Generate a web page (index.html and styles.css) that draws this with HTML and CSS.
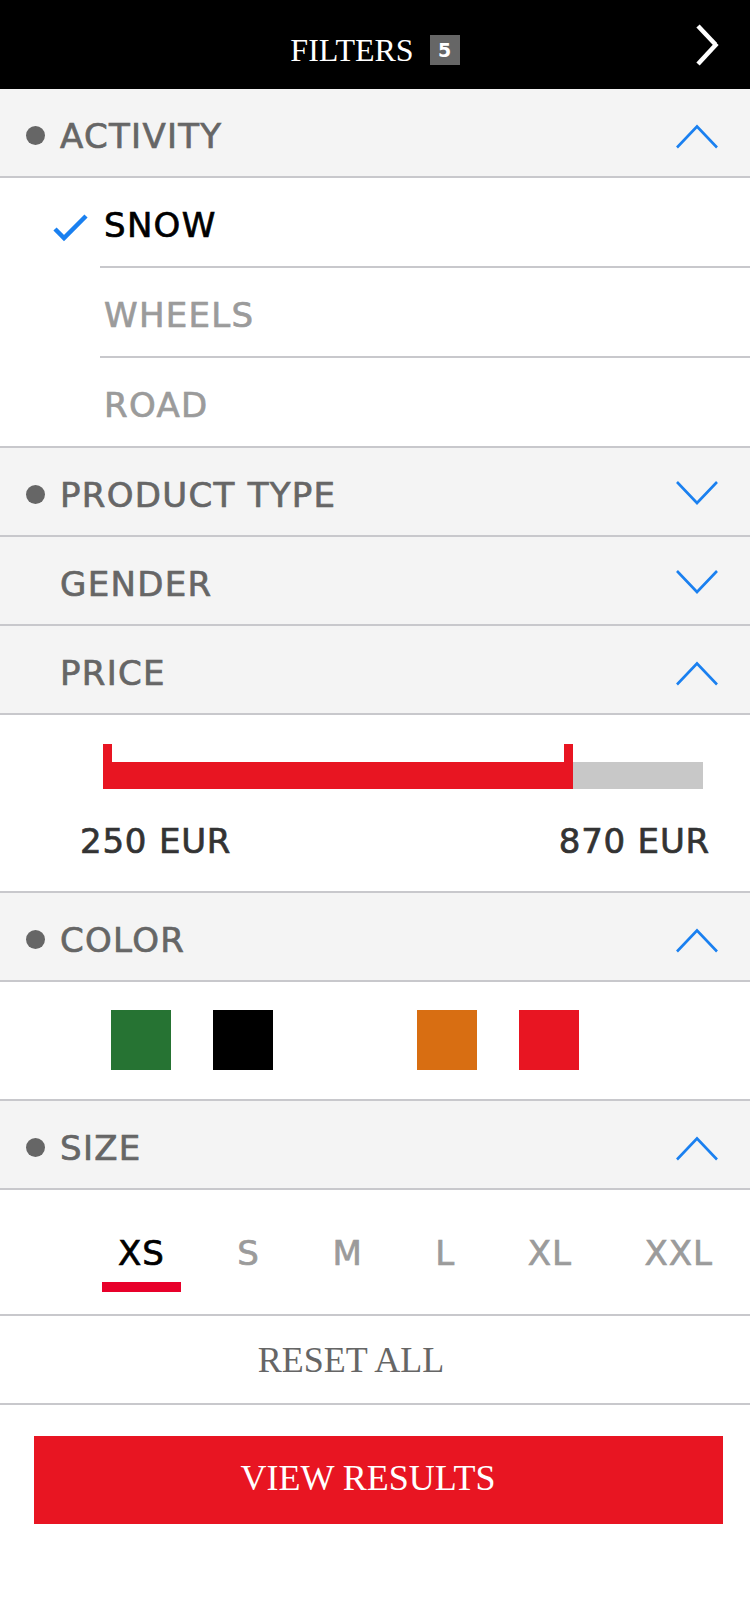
FILE: index.html
```html
<!DOCTYPE html>
<html>
<head>
<meta charset="utf-8">
<link rel="stylesheet" href="styles.css">
</head>
<body>
<div class="topbar">
  <div class="title-group">
    <span class="title">FILTERS</span>
    <span class="badge">5</span>
  </div>
  <svg class="close" width="30" height="46" viewBox="0 0 30 46">
    <line x1="6" y1="4" x2="23.5" y2="22.5" stroke="#fff" stroke-width="4.5"/>
    <line x1="25" y1="21.5" x2="6" y2="42" stroke="#fff" stroke-width="4.5"/>
  </svg>
</div>

<div class="acc-head">
  <span class="dot"></span>
  <span class="head-label">ACTIVITY</span>
  <svg class="chev" viewBox="0 0 42 30"><polyline points="1,26.5 21,5.5 41,26.5" fill="none" stroke="#1a80f0" stroke-width="2.6"/></svg>
</div>
<div class="opt-list">
  <div class="opt">
    <div class="check-col">
      <svg width="100" height="88" viewBox="0 0 100 88"><polyline points="55,51 64,60 86,38" fill="none" stroke="#1a80f0" stroke-width="4.5"/></svg>
    </div>
    <div class="opt-label on">SNOW</div>
  </div>
  <div class="opt">
    <div class="check-col"></div>
    <div class="opt-label">WHEELS</div>
  </div>
  <div class="opt">
    <div class="check-col"></div>
    <div class="opt-label">ROAD</div>
  </div>
</div>

<div class="acc-head">
  <span class="dot"></span>
  <span class="head-label">PRODUCT TYPE</span>
  <svg class="chev" viewBox="0 0 42 30"><polyline points="1,2 21,23 41,2" fill="none" stroke="#1a80f0" stroke-width="2.6"/></svg>
</div>
<div class="acc-head">
  <span class="dot none"></span>
  <span class="head-label">GENDER</span>
  <svg class="chev" viewBox="0 0 42 30"><polyline points="1,2 21,23 41,2" fill="none" stroke="#1a80f0" stroke-width="2.6"/></svg>
</div>
<div class="acc-head">
  <span class="dot none"></span>
  <span class="head-label">PRICE</span>
  <svg class="chev" viewBox="0 0 42 30"><polyline points="1,26.5 21,5.5 41,26.5" fill="none" stroke="#1a80f0" stroke-width="2.6"/></svg>
</div>
<div class="price-body">
  <div class="slider">
    <span class="handle"></span>
    <span class="fill" style="width:452px"></span>
    <span class="handle"></span>
    <span class="rest" style="width:130px"></span>
  </div>
  <div class="price-labels">
    <span>250 EUR</span>
    <span>870 EUR</span>
  </div>
</div>

<div class="acc-head">
  <span class="dot"></span>
  <span class="head-label">COLOR</span>
  <svg class="chev" viewBox="0 0 42 30"><polyline points="1,26.5 21,5.5 41,26.5" fill="none" stroke="#1a80f0" stroke-width="2.6"/></svg>
</div>
<div class="swatches">
  <span class="sw sw-green"></span>
  <span class="sw sw-black"></span>
  <span class="sw sw-white"></span>
  <span class="sw sw-orange"></span>
  <span class="sw sw-red"></span>
</div>

<div class="acc-head">
  <span class="dot"></span>
  <span class="head-label">SIZE</span>
  <svg class="chev" viewBox="0 0 42 30"><polyline points="1,26.5 21,5.5 41,26.5" fill="none" stroke="#1a80f0" stroke-width="2.6"/></svg>
</div>
<div class="sizes">
  <div class="size on"><span class="size-text">XS</span><span class="bar"></span></div>
  <div class="size"><span class="size-text">S</span><span class="bar"></span></div>
  <div class="size"><span class="size-text">M</span><span class="bar"></span></div>
  <div class="size"><span class="size-text">L</span><span class="bar"></span></div>
  <div class="size"><span class="size-text">XL</span><span class="bar"></span></div>
  <div class="size"><span class="size-text">XXL</span><span class="bar"></span></div>
</div>

<div class="reset">RESET ALL</div>
<div class="view">VIEW RESULTS</div>
</body>
</html>
```
FILE: styles.css
```css
* { box-sizing: border-box; margin: 0; padding: 0; }
body {
  width: 750px;
  background: #fff;
  font-family: "DejaVu Sans", sans-serif;
}
.topbar {
  height: 89px;
  background: #000;
  display: grid;
  grid-template-columns: 1fr auto 1fr;
  align-items: center;
}
.title-group {
  grid-column: 2;
  display: flex;
  align-items: center;
  gap: 16px;
  margin-top: 10px;
}
.title {
  font-family: "Liberation Serif", serif;
  font-size: 32px;
  line-height: 1;
  color: #fff;
}
.badge {
  width: 30px;
  height: 30px;
  background: #666;
  color: #fff;
  font-family: "DejaVu Sans", sans-serif;
  font-weight: bold;
  font-size: 19px;
  line-height: 30px;
  text-align: center;
}
.close {
  grid-column: 3;
  justify-self: end;
  margin-right: 28px;
  display: block;
}
.acc-head {
  height: 89px;
  background: #f4f4f4;
  border-bottom: 2px solid #c8c8cc;
  display: flex;
  align-items: center;
  padding: 6px 32px 0 26px;
}
.dot {
  width: 19px;
  height: 19px;
  border-radius: 50%;
  background: #666;
  margin-right: 15px;
  flex: none;
}
.dot.none { visibility: hidden; }
.head-label {
  flex: 1;
  font-size: 34px;
  line-height: 1;
  color: #666;
  letter-spacing: 1.3px;
  -webkit-text-stroke: 0.7px currentColor;
}
.chev {
  width: 42px;
  height: 30px;
  flex: none;
  display: block;
}
.opt-list { border-bottom: 2px solid #c8c8cc; }
.opt {
  display: flex;
  height: 90px;
}
.opt:last-child { height: 88px; }
.check-col { width: 100px; flex: none; }
.check-col svg { display: block; }
.opt-label {
  flex: 1;
  display: flex;
  align-items: center;
  padding: 6px 0 0 4px;
  border-bottom: 2px solid #c8c8cc;
  font-size: 34px;
  line-height: 1;
  letter-spacing: 1.3px;
  color: #9b9b9b;
  -webkit-text-stroke: 0.7px currentColor;
}
.opt:last-child .opt-label { border-bottom: 0; }
.opt-label.on { color: #000; }
.price-body {
  padding: 29px 0 33px;
  border-bottom: 2px solid #c8c8cc;
}
.slider {
  display: flex;
  align-items: flex-end;
  margin-left: 103px;
  width: 600px;
  height: 45px;
}
.handle { width: 9px; height: 45px; background: #e81522; flex: none; }
.fill { height: 27px; background: #e81522; flex: none; }
.rest { height: 27px; background: #c8c8c8; flex: none; }
.price-labels {
  display: flex;
  justify-content: space-between;
  margin-top: 35px;
  padding: 0 40px 0 80px;
  font-size: 34px;
  line-height: 1;
  color: #333;
  letter-spacing: 0.8px;
  -webkit-text-stroke: 0.7px currentColor;
}
.swatches {
  display: flex;
  gap: 42px;
  padding: 28px 0 29px 111px;
  border-bottom: 2px solid #c8c8cc;
}
.sw { width: 60px; height: 60px; flex: none; }
.sw-green { background: #267333; }
.sw-black { background: #000; }
.sw-white { background: #fff; }
.sw-orange { background: #d86e12; }
.sw-red { background: #e81522; }
.sizes {
  display: flex;
  justify-content: space-between;
  padding: 46px 21px 22px 102px;
  border-bottom: 2px solid #c8c8cc;
}
.size {
  display: flex;
  flex-direction: column;
  font-size: 34px;
  line-height: 1;
  color: #9b9b9b;
  letter-spacing: 1px;
  -webkit-text-stroke: 0.7px currentColor;
}
.size-text { padding: 0 16px; }
.bar { height: 10px; margin-top: 12px; }
.size.on { color: #000; }
.size.on .bar { background: #e8002a; }
.reset {
  height: 89px;
  border-bottom: 2px solid #c8c8cc;
  display: flex;
  align-items: center;
  justify-content: center;
  padding-right: 48px;
  font-family: "Liberation Serif", serif;
  font-size: 36px;
  line-height: 1;
  color: #666;
}
.view {
  margin: 31px 27px 0 34px;
  height: 88px;
  background: #e81522;
  color: #fff;
  display: flex;
  align-items: center;
  justify-content: center;
  padding: 0 21px 4px 0;
  font-family: "Liberation Serif", serif;
  font-size: 36px;
  line-height: 1;
}
```
